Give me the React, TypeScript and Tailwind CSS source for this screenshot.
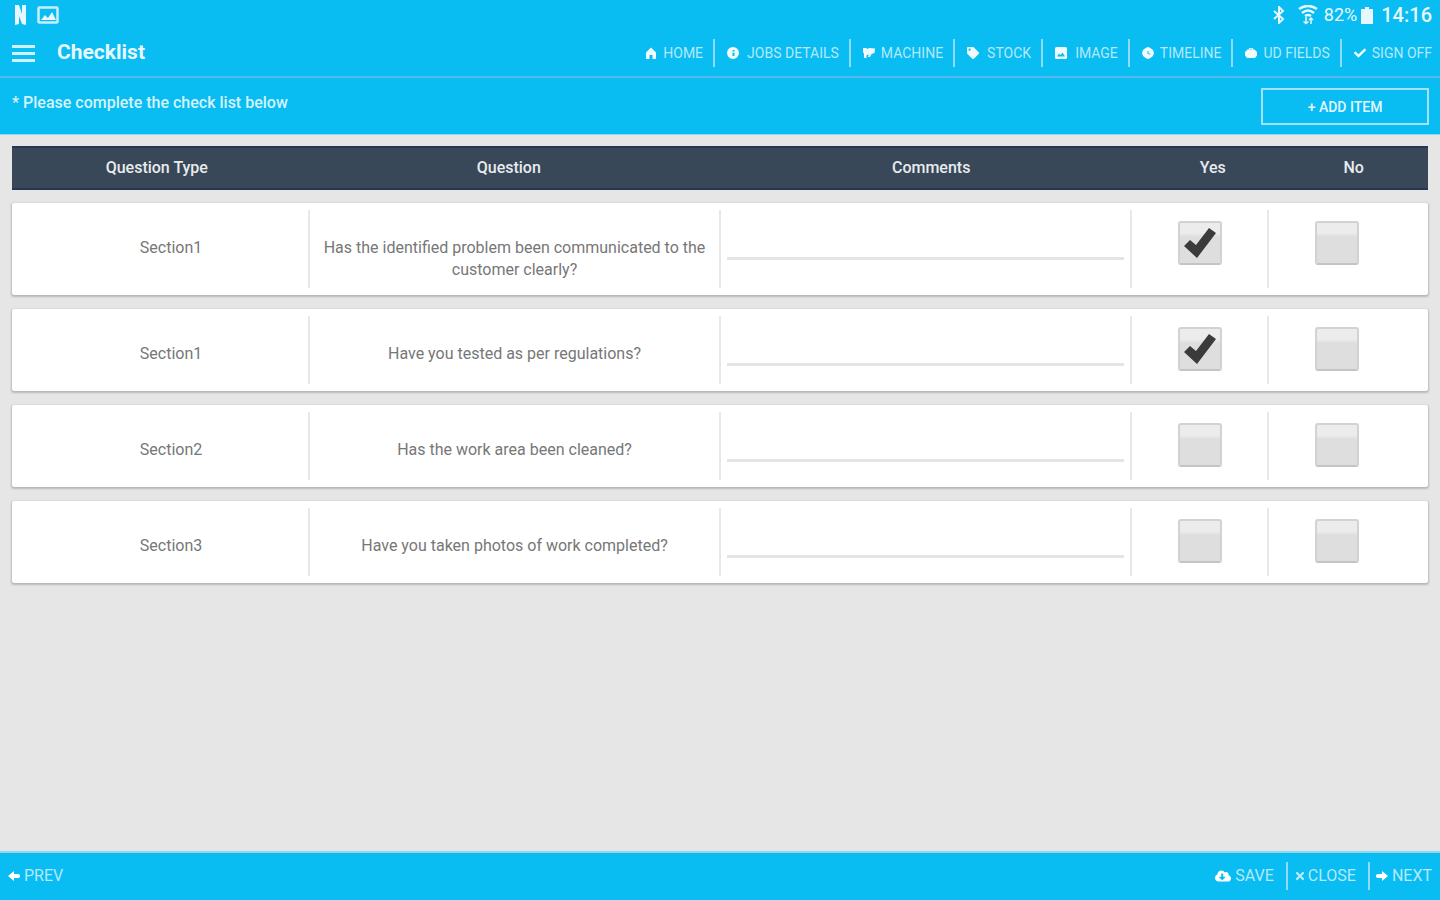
import { useState } from 'react'
import { FaCheck, FaCloudDownloadAlt, FaTag, FaTimes } from 'react-icons/fa'

interface Item {
  id: number
  section: string
  question: string
  comment: string
  yes: boolean
  no: boolean
}

const INITIAL_ITEMS: Item[] = [
  { id: 1, section: 'Section1', question: 'Has the identified problem been communicated to the customer clearly?', comment: '', yes: true, no: false },
  { id: 2, section: 'Section1', question: 'Have you tested as per regulations?', comment: '', yes: true, no: false },
  { id: 3, section: 'Section2', question: 'Has the work area been cleaned?', comment: '', yes: false, no: false },
  { id: 4, section: 'Section3', question: 'Have you taken photos of work completed?', comment: '', yes: false, no: false },
]

interface GlyphProps {
  className?: string
}

// Solid 12x12 glyphs; holes are cut with evenodd so the bar colour shows through.
const glyph = (d: string) => ({ className }: GlyphProps) => (
  <svg viewBox="0 0 12 12" className={className} fill="currentColor" fillRule="evenodd" aria-hidden="true">
    <path d={d} />
  </svg>
)

const HomeIcon = glyph('M6 0.500L11 5.500V12H7.500V8H4.500v4H1V5.500z')
const DetailsIcon = glyph('M6 0a6 6 0 1 0 0 12A6 6 0 0 0 6 0zM5.500 3h2v1.500h-2zM5.500 5.500h2V9h-2z')
const MachineIcon = glyph('M0 1h3l1.500 1L6 1l6 .5-.5 4.500-3 1L7 10H5l.5-2.500L3.500 8v3H1V7L0 5z')
const ImageIcon = glyph('M1.500 0h9A1.500 1.500 0 0 1 12 1.500v9a1.500 1.500 0 0 1-1.500 1.500h-9A1.500 1.500 0 0 1 0 10.500v-9A1.500 1.500 0 0 1 1.500 0zM2 9.500h8L7.500 5.500 5.500 8 4 6.500z')
const TimelineIcon = glyph('M6 0l2 .8L11 3l1 3-1 3-3 2.200L6 12l-2-.8L1 9 0 6l1-3L4 .8zM5.500 4v2.800l2.500 1 .4-.8-1.900-.8V4z')
const FieldsIcon = glyph('M4 2.500V1h4v1.500h1.500L12 5v3.500L10 11H2L0 8.500V5l2.500-2.500zM5 2.500h2V1.800H5z')
const LeftIcon = glyph('M0 6l6-5v3h4.500L12 5v2l-1.500 1H6v3z')
const RightIcon = glyph('M12 6L6 1v3H1.500L0 5v2l1.500 1H6v3z')

const navItems = [
  { label: 'HOME', icon: HomeIcon, gap: 'gap-1.5' },
  { label: 'JOBS DETAILS', icon: DetailsIcon, gap: 'gap-2' },
  { label: 'MACHINE', icon: MachineIcon, gap: 'gap-1.5' },
  { label: 'STOCK', icon: FaTag, gap: 'gap-2' },
  { label: 'IMAGE', icon: ImageIcon, gap: 'gap-2' },
  { label: 'TIMELINE', icon: TimelineIcon, gap: 'gap-1.5' },
  { label: 'UD FIELDS', icon: FieldsIcon, gap: 'gap-1.5' },
  { label: 'SIGN OFF', icon: FaCheck, gap: 'gap-1.5' },
]

function StatusBar() {
  return (
    <div className="flex h-[30px] items-center justify-between pl-3.5 pr-2">
      <div className="flex items-center gap-2.5">
        <svg viewBox="0 0 13 20" className="h-5 w-[13px]" aria-hidden="true">
          <path d="M1 0h4l3 9V0h4v20l-4-1-3-8v8l-4 1z" fill="#e6f7fe" />
        </svg>
        <svg viewBox="0 0 22 18" className="h-[18px] w-[22px]" aria-hidden="true">
          <rect x="1.500" y="1.500" width="19" height="15" rx="1" fill="none" stroke="#c8effc" strokeWidth="2.500" />
          <path d="M4 14l4-5 3 3 4-6 4 8z" fill="#e6f7fe" />
        </svg>
      </div>
      <div className="flex items-center text-[#e6f7fe]">
        <svg viewBox="0 0 14 18" className="mr-3 h-[18px] w-3.5" fill="none" stroke="currentColor" strokeWidth="2" aria-hidden="true">
          <path d="M2 5l9 8-4 4V1l4 4-9 8" />
        </svg>
        <svg viewBox="0 0 20 20" className="mr-1.5 h-5 w-5" fill="none" stroke="currentColor" strokeWidth="2.500" aria-hidden="true">
          <path d="M1 4q9-6 18 0M4 8q6-5 12 0M7 11q3-2 6 0" />
          <path d="M8 12v7M5.500 16.500l2.500 2 2.500-2M13 19v-6M11 15l2-2 2 2" strokeWidth="1.500" />
        </svg>
        <span className="mr-1 text-lg leading-5">82%</span>
        <svg viewBox="0 0 12 17" className="mr-2 h-[17px] w-3" fill="currentColor" aria-hidden="true">
          <path d="M4 0h4v2h4v15H0V2h4z" />
        </svg>
        <span className="text-xl font-medium leading-5">14:16</span>
      </div>
    </div>
  )
}

export default function App() {
  const [items, setItems] = useState(INITIAL_ITEMS)

  const update = (id: number, patch: Partial<Item>) =>
    setItems(prev => prev.map(item => (item.id === id ? { ...item, ...patch } : item)))

  const addItem = () =>
    setItems(prev => [...prev, { id: prev.length + 1, section: 'Section', question: '', comment: '', yes: false, no: false }])

  return (
    <div className="flex min-h-screen flex-col bg-[#e6e6e6] font-['Roboto',sans-serif]">
      <header className="bg-[#09bcf2] text-white">
        <StatusBar />
        <div className="flex h-12 items-center justify-between border-b-2 border-[#52bbe8] pl-3">
          <div className="flex items-center gap-[22px]">
            <button aria-label="Menu" className="flex w-[23px] flex-col gap-1 cursor-pointer">
              <span className="h-[3px] bg-[#d0f1fd]" />
              <span className="h-[3px] bg-[#d0f1fd]" />
              <span className="h-[3px] bg-[#d0f1fd]" />
            </button>
            <h1 className="text-[21px] font-bold text-[#e6f7fe]">Checklist</h1>
          </div>
          <nav className="flex">
            {navItems.map(item => (
              <a key={item.label} href="#"
                className={`flex h-7 items-center pl-3 pr-2.5 text-sm text-[#b5e9fb] border-r-2 border-[#8fdcf8] last:border-r-0 last:pr-2 ${item.gap}`}>
                <item.icon className="h-3 w-3 text-[#f0fbff]" />
                {item.label}
              </a>
            ))}
          </nav>
        </div>
        <div className="flex h-[57px] items-start justify-between border-b border-[#8fd8f0] pt-2.5 pl-3 pr-[11px]">
          <p className="font-medium leading-[30px] text-[#d5f3fd]">* Please complete the check list below</p>
          <button onClick={addItem}
            className="h-[37px] w-[168px] border-2 border-[#a3e3fa] text-sm font-medium text-[#e6f7fe] cursor-pointer">
            + ADD ITEM
          </button>
        </div>
      </header>

      <main className="flex-1 px-3 pt-[11px]">
        <table className="block w-full text-center text-[#777]">
          <thead className="block">
            <tr className="grid h-11 grid-cols-[2fr_3fr_3fr_1fr_1fr] items-center border-y-2 border-[#24394b] bg-[#394858] px-1 text-[#e8ebee]">
              <th className="font-medium">Question Type</th>
              <th className="font-medium">Question</th>
              <th className="font-medium">Comments</th>
              <th className="font-medium">Yes</th>
              <th className="font-medium">No</th>
            </tr>
          </thead>
          <tbody className="flex flex-col gap-3.5 pt-[13px]">
            {items.map(item => (
              <tr key={item.id}
                className="grid grid-cols-[2fr_3fr_3fr_1fr_1fr] rounded-[2px] bg-white pl-[22px] pr-6 py-[7px] leading-[22px] shadow-[0_1px_2px_1px_rgba(0,0,0,0.2)]">
                <td className="pt-[27px]">{item.section}</td>
                <td className="border-l-2 border-[#e8e8e8] px-3 pt-[27px] pb-[7px]">{item.question}</td>
                <td className="border-l-2 border-[#e8e8e8] px-1.5 pt-4">
                  <input type="text" aria-label={`Comments: ${item.question}`} value={item.comment}
                    onChange={e => update(item.id, { comment: e.target.value })}
                    className="h-[34px] w-full border-b-[3px] border-[#e4e4e4] bg-transparent outline-none" />
                </td>
                {(['yes', 'no'] as const).map(answer => (
                  <td key={answer} className="border-l-2 border-[#e8e8e8] pt-[11px] pb-[13px]">
                    <label className="relative mx-auto block h-11 w-11 cursor-pointer">
                      <input type="checkbox" aria-label={`${answer}: ${item.question}`} checked={item[answer]}
                        onChange={e => update(item.id, { [answer]: e.target.checked })}
                        className="block h-11 w-11 appearance-none rounded-[3px] border-2 border-[#d2d2d2] border-b-[#c4c4c4] bg-linear-to-b from-[#ececec] from-25% to-[#dedede] to-35%" />
                      {item[answer] && (
                        <svg viewBox="0 0 44 44" className="pointer-events-none absolute inset-0" aria-hidden="true">
                          <path d="M6 25l6-6 6 5L31 7l7 5-19 25z" fill="#3b3b3b" />
                        </svg>
                      )}
                    </label>
                  </td>
                ))}
              </tr>
            ))}
          </tbody>
        </table>
      </main>

      <footer className="flex h-[49px] items-center justify-between border-t-2 border-[#8fd8f0] bg-[#09bcf2] px-2 pb-0.5 text-[#b5e9fb]">
        <button className="flex items-center gap-1 cursor-pointer">
          <LeftIcon className="h-3 w-3 text-white" />
          PREV
        </button>
        <div className="flex items-center">
          <button className="flex h-7 items-center gap-1 border-r-2 border-[#8fdcf8] pr-3 cursor-pointer">
            <FaCloudDownloadAlt className="h-4 w-4 text-white" />
            SAVE
          </button>
          <button className="flex h-7 items-center gap-0.5 border-r-2 border-[#8fdcf8] pl-1.5 pr-3 cursor-pointer">
            <FaTimes className="h-3 w-3" />
            CLOSE
          </button>
          <button className="flex h-7 items-center gap-1 pl-1.5 cursor-pointer">
            <RightIcon className="h-3 w-3 text-white" />
            NEXT
          </button>
        </div>
      </footer>
    </div>
  )
}
